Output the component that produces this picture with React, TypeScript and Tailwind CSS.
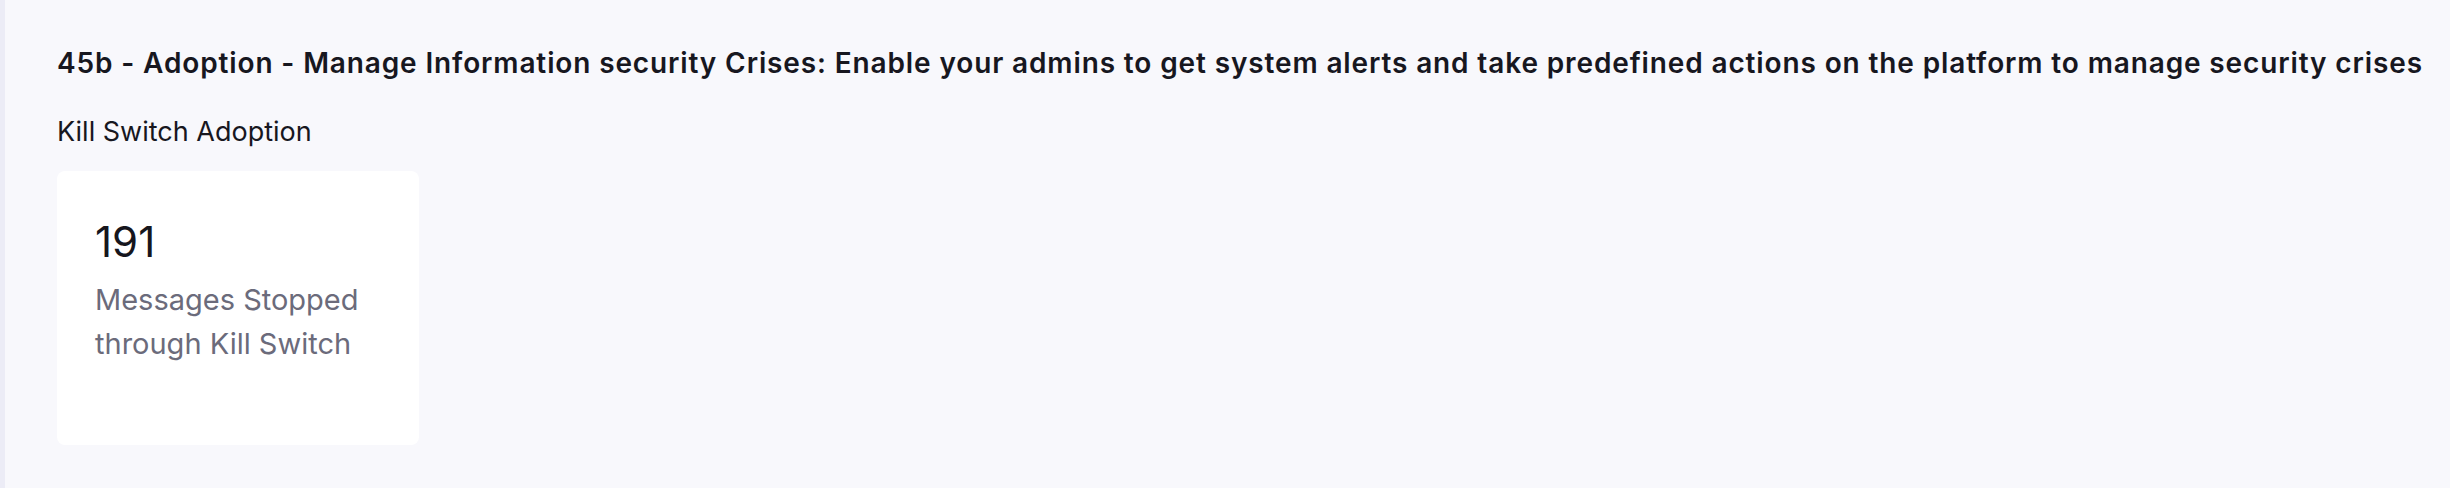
import React from "react";

// ─── Stat card ──────────────────────────────────────────────────

function StatCard({ value, label }: { value: string; label: string }) {
  return (
    <div className="w-[362px] h-[274px] rounded-lg bg-white pl-[38px] pr-6 pt-[46px]">
      <p className="text-[42px] leading-[50px] text-[#16161d]">{value}</p>
      <p className="mt-[11px] text-[29px] leading-[44px] text-[#6b6b7b]">{label}</p>
    </div>
  );
}

// ─── Main Component ─────────────────────────────────────────────

export default function App() {
  return (
    <div className="flex min-h-[488px] w-full bg-[#f8f8fc] font-['Inter',sans-serif]">
      <div className="w-[5px] shrink-0 bg-[#ececf6]" />
      <div className="flex-1 pl-[52px] pt-[43px]">
        <h1 className="text-[28px] leading-[40px] font-semibold tracking-[0.87px] text-[#17171f] whitespace-nowrap">
          45b - Adoption - Manage Information security Crises: Enable your admins to get system alerts and take predefined actions on the platform to manage security crises
        </h1>
        <h2 className="mt-[29px] text-[27px] leading-[40px] text-[#17171f]">Kill Switch Adoption</h2>
        <div className="mt-[19px] flex gap-6">
          <StatCard value="191" label="Messages Stopped through Kill Switch" />
        </div>
      </div>
    </div>
  );
}
